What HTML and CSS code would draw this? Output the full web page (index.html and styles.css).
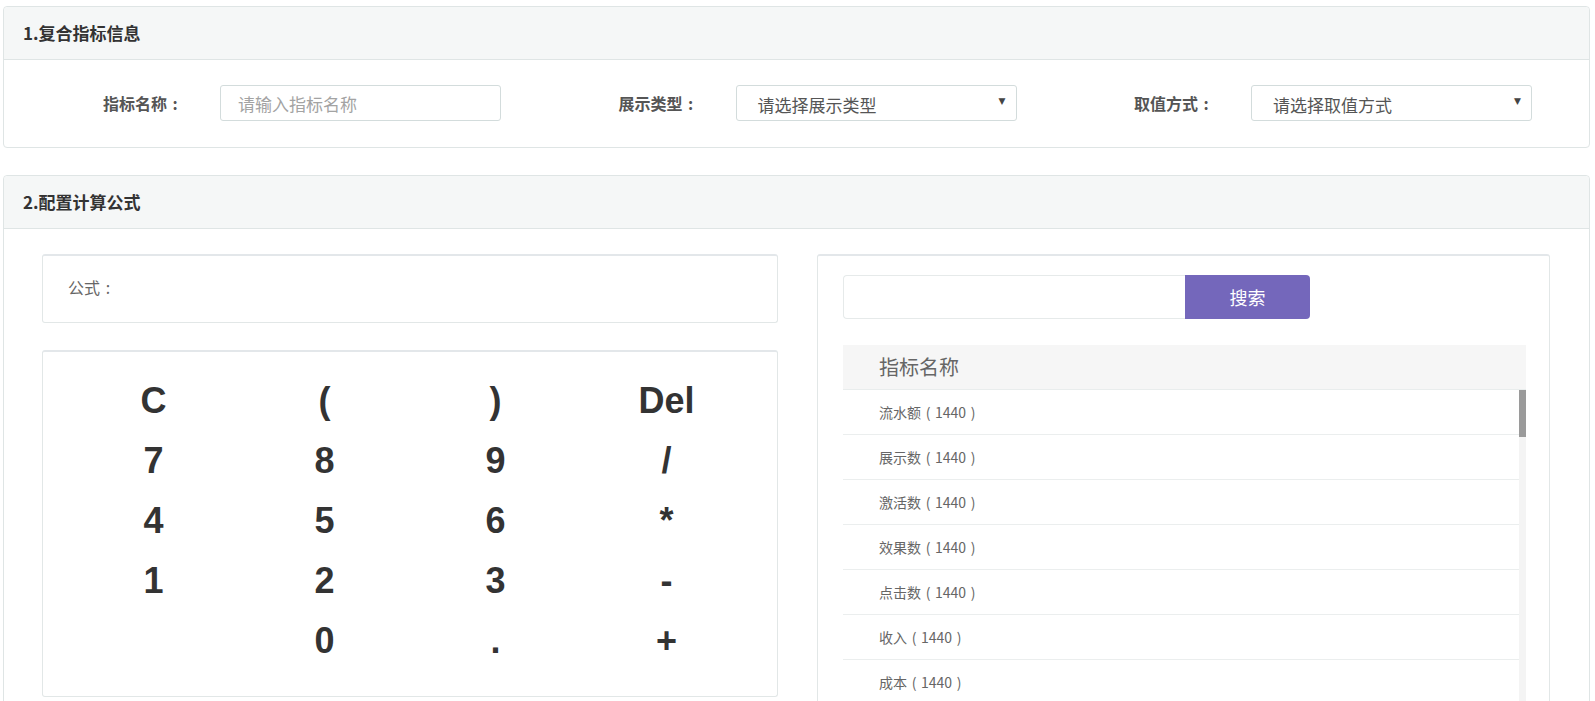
FILE: index.html
```html
<!DOCTYPE html>
<html lang="zh">
<head>
<meta charset="utf-8">
<title>复合指标</title>
<link rel="stylesheet" href="styles.css">
</head>
<body>
<div class="page">
  <section class="panel">
    <div class="panel-head">1.复合指标信息</div>
    <div class="panel-body form-row">
      <div class="group">
        <label class="label">指标名称<span class="p">:</span></label>
        <div class="control input placeholder">请输入指标名称</div>
      </div>
      <div class="group">
        <label class="label">展示类型<span class="p">:</span></label>
        <div class="control select"><span>请选择展示类型</span><span class="arrow">▼</span></div>
      </div>
      <div class="group">
        <label class="label">取值方式<span class="p">:</span></label>
        <div class="control select"><span>请选择取值方式</span><span class="arrow">▼</span></div>
      </div>
    </div>
  </section>

  <section class="panel panel2">
    <div class="panel-head">2.配置计算公式</div>
    <div class="panel-body cols">
      <div class="left">
        <div class="formula">公式<span class="p">:</span></div>
        <div class="calc">
          <span>C</span><span>(</span><span>)</span><span>Del</span>
          <span>7</span><span>8</span><span>9</span><span>/</span>
          <span>4</span><span>5</span><span>6</span><span>*</span>
          <span>1</span><span>2</span><span>3</span><span>-</span>
          <span></span><span>0</span><span>.</span><span>+</span>
        </div>
      </div>
      <div class="right">
        <div class="search">
          <div class="search-input"></div>
          <div class="search-btn">搜索</div>
        </div>
        <div class="table">
          <div class="thead">指标名称</div>
          <div class="tbody">
            <div class="rows">
              <div class="row">流水额<span class="p">(</span>1440<span class="p">)</span></div>
              <div class="row">展示数<span class="p">(</span>1440<span class="p">)</span></div>
              <div class="row">激活数<span class="p">(</span>1440<span class="p">)</span></div>
              <div class="row">效果数<span class="p">(</span>1440<span class="p">)</span></div>
              <div class="row">点击数<span class="p">(</span>1440<span class="p">)</span></div>
              <div class="row">收入<span class="p">(</span>1440<span class="p">)</span></div>
              <div class="row">成本<span class="p">(</span>1440<span class="p">)</span></div>
              <div class="row">利润<span class="p">(</span>1440<span class="p">)</span></div>
            </div>
            <div class="scrollbar"><div class="thumb"></div></div>
          </div>
        </div>
      </div>
    </div>
  </section>
</div>
</body>
</html>
```

FILE: styles.css
```css
html, body {
  margin: 0;
  padding: 0;
  overflow: hidden;
  height: 701px;
  background: #fff;
}
body {
  font-family: "Liberation Sans", "Noto Sans CJK SC", sans-serif;
  color: #333;
}
.page {
  padding: 6px 5px 0 3px;
}
.panel {
  border: 1px solid #dfe5e5;
  border-radius: 4px;
  background: #fff;
}
.panel2 {
  margin-top: 27px;
}
.panel-head {
  height: 52px;
  line-height: 52px;
  background: #f5f7f7;
  border-bottom: 1px solid #dfe5e5;
  border-radius: 4px 4px 0 0;
  padding-left: 19px;
  font-family: "Noto Sans CJK SC", "Liberation Sans", sans-serif;
  font-size: 17px;
  font-weight: bold;
  color: #333;
}
.p {
  display: inline-block;
  width: 1em;
  text-align: center;
}
.form-row {
  display: flex;
  padding: 25px 0 26px 76px;
}
.group {
  width: 515.5px;
  flex: none;
  display: flex;
  align-items: center;
}
.label {
  width: 103px;
  padding-right: 37px;
  text-align: right;
  font-family: "Noto Sans CJK SC", sans-serif;
  font-size: 16px;
  font-weight: bold;
  color: #555;
  white-space: nowrap;
}
.control {
  box-sizing: border-box;
  width: 281px;
  height: 36px;
  border: 1px solid #d3dcdc;
  border-radius: 3px;
  font-family: "Noto Sans CJK SC", sans-serif;
  font-size: 17px;
  display: flex;
  align-items: center;
}
.input {
  padding-left: 17px;
  color: #a3a3a3;
}
.select {
  padding: 2px 10px 0 21px;
  justify-content: space-between;
  color: #555;
}
.arrow {
  font-family: "DejaVu Sans", sans-serif;
  font-size: 9px;
  color: #444;
  margin-top: -6px;
}
.cols {
  display: grid;
  grid-template-columns: 1fr 1fr;
  column-gap: 39px;
  padding: 25px 39px 0 38px;
}
.formula {
  box-sizing: border-box;
  height: 69px;
  border: 1px solid #e2e7e7;
  border-top: 2px solid #e3e7ea;
  border-radius: 3px;
  padding: 19px 0 0 25px;
  font-family: "Noto Sans CJK SC", sans-serif;
  font-size: 16px;
  color: #666;
}
.calc {
  box-sizing: border-box;
  margin-top: 27px;
  height: 347px;
  border: 1px solid #e2e7e7;
  border-top: 2px solid #e3e7ea;
  border-radius: 3px;
  padding: 19px 25px 0 25px;
  display: grid;
  grid-template-columns: repeat(4, 171px);
  grid-auto-rows: 60px;
}
.calc span {
  display: flex;
  align-items: center;
  justify-content: center;
  font-family: "Liberation Sans", sans-serif;
  font-weight: bold;
  font-size: 36px;
  color: #333;
}
.right {
  border: 1px solid #e2e7e7;
  border-top: 2px solid #e3e7ea;
  border-radius: 3px;
  padding: 19px 23px 0 25px;
  height: 600px;
}
.search {
  display: flex;
  height: 44px;
}
.search-input {
  box-sizing: border-box;
  width: 342px;
  border: 1px solid #e6eaea;
  border-right: none;
  border-radius: 4px 0 0 4px;
}
.search-btn {
  width: 125px;
  background: #7467bb;
  color: #fff;
  border-radius: 0 4px 4px 0;
  font-family: "Noto Sans CJK SC", sans-serif;
  font-size: 18px;
  display: flex;
  align-items: center;
  justify-content: center;
}
.table {
  margin-top: 26px;
}
.thead {
  height: 44px;
  line-height: 44px;
  background: #f6f6f6;
  border-bottom: 1px solid #e9eded;
  padding-left: 36px;
  font-family: "Noto Sans CJK SC", sans-serif;
  font-size: 20px;
  color: #666;
}
.tbody {
  display: flex;
}
.rows {
  flex: 1;
}
.row {
  height: 44px;
  line-height: 44px;
  border-bottom: 1px solid #ebeeee;
  padding-left: 36px;
  font-family: "Noto Sans CJK SC", sans-serif;
  font-size: 14px;
  color: #666;
}
.scrollbar {
  width: 7px;
  background: #f4f4f4;
}
.thumb {
  height: 47px;
  background: #9a9a9a;
}
```
